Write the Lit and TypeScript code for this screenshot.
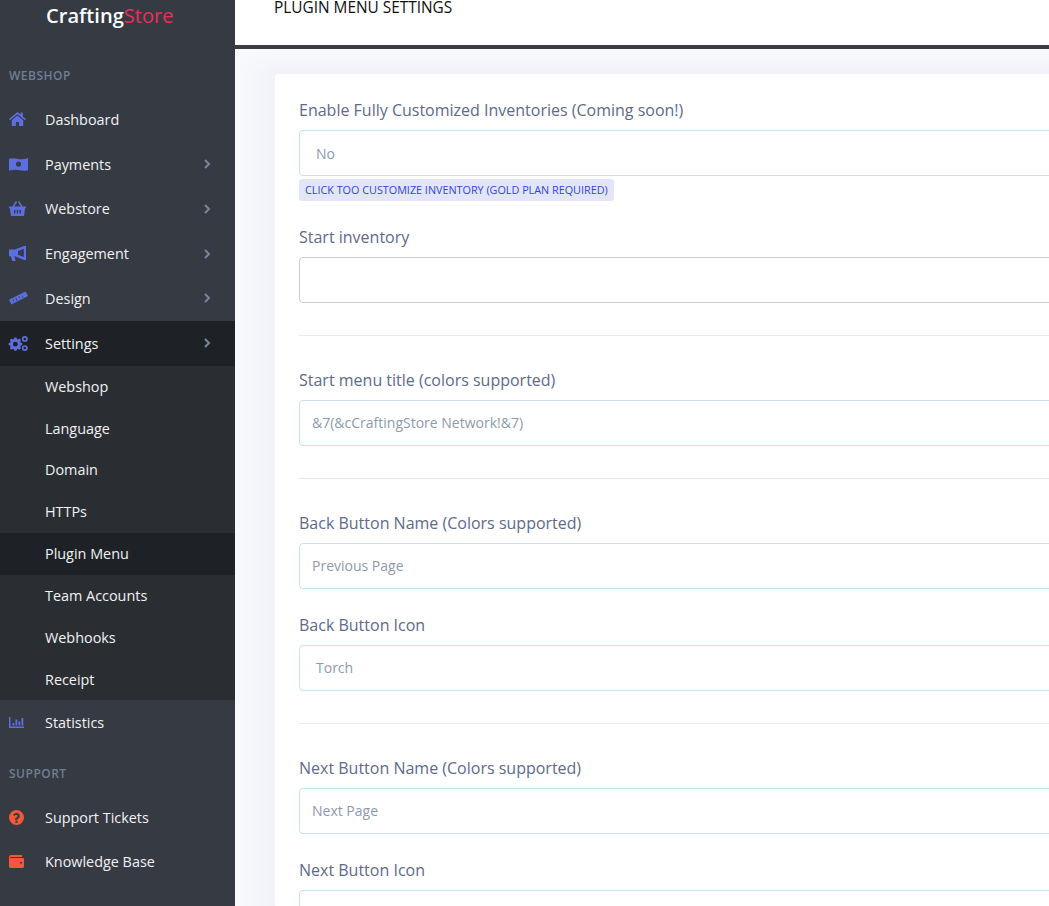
import { LitElement, html, css, svg } from "lit";
import { customElement } from "lit/decorators.js";

const I: Record<string, any> = {
  home: svg`<path d="M8.600 0 0 7l1 1.200L8.600 2.200 16.200 8.200l1-1.200L14 4.400V.6h-2.200v2L8.600 0Zm0 3.600L2.800 8.300V14h4.200v-4h3.200v4h4.200V8.300L8.600 3.600Z"/>`,
  money: svg`<path fill-rule="evenodd" d="M0 1.800C3 .8 6 1.400 9.500 2c3 .4 6 .1 9-1V12.200c-3 1-6 .6-9.500-.1-3-.5-6-.3-9 .7V1.800Zm9.300 2.300a2.500 2.500 0 1 0 0 5 2.500 2.500 0 0 0 0-5Z"/>`,
  basket: svg`<path fill-rule="evenodd" d="M0 5.400h3.400L6.800 0l1.300.9-2.800 4.500h6.400L8.900.9 10.200 0l3.400 5.400H17v1.700h-.9L15 14.500H2L.9 7.100H0V5.400Zm5 3v3.800h1.400V8.400H5Zm2.800 0v3.800h1.400V8.400H7.800Zm2.800 0v3.800H12V8.400h-1.400Z"/>`,
  horn: svg`<path fill-rule="evenodd" d="M0 3.500H6L15 0H17V14H15L6 10.200H5.500L6.700 15H3L2 10.200H0V3.500ZM9 5V8.800L14.800 11V2.800L9 5Z"/>`,
  ruler: svg`<path fill-rule="evenodd" d="M0 8.800 16.300.5l2.400 4.600L2.400 13.500 0 8.800Zm3.400-.3 1 1.900.7-.3-1-1.900-.7.3Zm2.900-1.400 1.400 2.800.7-.3-1.400-2.800-.7.3Zm3-1.500 1 1.900.7-.3-1-1.900-.7.3Zm2.900-1.400 1.400 2.800.7-.3L13 4.400l-.7.3Z"/>`,
  cogs: svg`<path fill-rule="evenodd" d="M5.200 1.500h2.400l.3 1.600 1.100.5 1.400-.9 1.700 1.700-.9 1.400.5 1.100 1.500.3v2.400l-1.500.3-.5 1.100.9 1.400-1.700 1.700-1.400-.9-1.100.5-.3 1.500H5.200l-.3-1.500-1.100-.5-1.400.9L.7 12.400l.9-1.400-.5-1.100L-.4 9.600V7.200l1.500-.3.5-1.100-.9-1.400 1.700-1.700 1.400.9 1.100-.5.3-1.600Zm1.200 4.400a2.500 2.500 0 1 0 0 5 2.500 2.500 0 0 0 0-5Z"/><path fill-rule="evenodd" d="M15.800 0a3 3 0 1 1 0 6 3 3 0 0 1 0-6Zm0 1.700a1.300 1.300 0 1 0 0 2.600 1.300 1.300 0 0 0 0-2.600ZM15.800 9.500a3 3 0 1 1 0 6 3 3 0 0 1 0-6Zm0 1.700a1.300 1.300 0 1 0 0 2.600 1.300 1.300 0 0 0 0-2.600Z"/>`,
  chart: svg`<path d="M0 0h1.500v9.500H15V11H0V0Zm3.500 6h1.800v2.500H3.500V6Zm3-3.500h1.800v6H6.500v-6Zm3 2h1.800v4H9.500v-4Zm3-3.500h1.800v7.500h-1.800V1Z"/>`,
  question: svg`<path fill-rule="evenodd" d="M7.500 0a7.500 7.500 0 1 1 0 15 7.500 7.500 0 0 1 0-15ZM7.600 3C5.900 3 4.700 3.800 4 5l1.500 1.100c.5-.6.9-1 1.800-1 .7 0 1.300.4 1.300 1 0 .5-.4.8-1 1.100-.8.5-1.500 1-1.500 2.100V10h2.200v-.4c0-.4.4-.6 1-1 .8-.5 1.500-1.200 1.500-2.500C10.800 4.100 9.300 3 7.600 3ZM6.400 10.700v2h2.300v-2H6.400Z"/>`,
  wallet: svg`<path fill-rule="evenodd" d="M2 0h11v2H1.500C1 2 1 3 1.500 3H13.500A1.500 1.500 0 0 1 15 4.500V12a1.500 1.500 0 0 1-1.500 1.500H1.500A1.500 1.500 0 0 1 0 12V2a2 2 0 0 1 2-2Zm10 7a1 1 0 1 0 0 2 1 1 0 0 0 0-2Z"/>`,
};

@customElement("app-root")
export class AppRoot extends LitElement {
  static styles = css`
    :host { display: block; width: 1049px; height: 906px; overflow: hidden; font-family: "Open Sans", "Liberation Sans", sans-serif; background: #f2f3f8; }
    * { box-sizing: border-box; }
    .app { display: flex; height: 906px; }
    .side { width: 235px; flex: none; background: #363a43; color: #f0f2f5; font-size: 14.4px; }
    .logo { height: 32px; padding-left: 46px; font-size: 20.1px; line-height: 32px; font-weight: 600; color: #fff; }
    .logo span { color: #e8305a; font-weight: 400; }
    .sec { height: 14px; margin: 0 0 0 9px; font-size: 12px; line-height: 14px; font-weight: 600; letter-spacing: .5px; color: #6f7f93; }
    .sec.a { margin-top: 37px; margin-bottom: 14px; }
    .sec.b { margin-top: 22px; margin-bottom: 13.7px; }
    .row { display: flex; align-items: center; height: 44.75px; padding-left: 9px; font-weight: 500; }
    .row .ic { width: 36px; height: 18px; display: flex; align-items: center; flex: none; }
    .row svg.i { fill: #5d6fe0; display: block; overflow: visible; }
    .row.orange svg.i { fill: #f4583a; }
    .row .t { flex: 1; }
    .row .ch { width: 8px; height: 10px; margin-right: 24px; stroke: #77879b; fill: none; stroke-width: 2; }
    .row.active { background: #1e2226; }
    .sub { background: #2a2e33; }
    .s { height: 41.85px; padding: .3px 0 0 45px; line-height: 41.5px; font-weight: 500; }
    .s.on { background: #1e2226; }
    .main { flex: 1; min-width: 0; }
    .head { height: 49px; background: #fff; border-bottom: 4px solid #3a3d46; color: #111; font-size: 15.4px; padding-left: 39px; line-height: 15px; font-weight: 400; }
    .body { padding: 25px 0 0 40px; background: linear-gradient(180deg, #f8f9fc, rgba(242, 243, 248, 0) 25px), linear-gradient(90deg, #f8f9fc, #f2f3f8 40px); height: 857px; overflow: hidden; }
    .card { width: 900px; background: #fff; border-radius: 4px 0 0 0; padding: 24px; height: 900px; }
    label { display: block; height: 24px; line-height: 24px; font-size: 16px; color: #5e6a8c; margin-bottom: 8px; }
    .input { height: 46px; border: 1px solid #c5e4f0; border-radius: 4px; padding-left: 12px; line-height: 44px; font-size: 14px; color: #8e9aaf; }
    .input.sel { padding-left: 16px; line-height: 46px; }
    .input.sel.low { line-height: 44px; }
    .input.gray { border-color: #c9ccd2; }
    .badge { display: inline-block; margin-top: 3px; height: 22px; line-height: 22px; padding: 0 6px; border-radius: 3px; background: #e3e6fa; color: #2f44e6; font-size: 10.8px; font-weight: 500; vertical-align: top; }
    .g.after-badge { margin-top: 24px; }
    .g.m { margin-top: 24px; }
    hr { border: 0; border-top: 1px solid #e8ebf1; margin: 32px 0; }
  `;

  private row(label: string, name: string, w: number, h: number, vbw: number, vbh: number, chev = false, cls = "") {
    return html`<div class="row ${cls}"><span class="ic"><svg class="i" width=${w} height=${h} viewBox="0 0 ${vbw} ${vbh}" preserveAspectRatio="none">${I[name]}</svg></span><span class="t">${label}</span>
      ${chev ? html`<svg class="ch" viewBox="0 0 8 10"><path d="M2 1l4 4-4 4"/></svg>` : ""}</div>`;
  }

  private field(label: string, value: string, cls = "", gcls = "") {
    return html`<div class="g ${gcls}"><label>${label}</label><div class="input ${cls}">${value}</div></div>`;
  }

  render() {
    return html`<div class="app">
      <aside class="side">
        <div class="logo">Crafting<span>Store</span></div>
        <div class="sec a">WEBSHOP</div>
        ${this.row("Dashboard", "home", 17, 14, 17.2, 14)}
        ${this.row("Payments", "money", 19, 14, 18.5, 13, true)}
        ${this.row("Webstore", "basket", 17, 15, 17, 14.5, true)}
        ${this.row("Engagement", "horn", 17, 15, 17, 15, true)}
        ${this.row("Design", "ruler", 19, 14, 18.7, 14, true)}
        ${this.row("Settings", "cogs", 19, 15, 19, 15.5, true, "active")}
        <div class="sub">
          <div class="s">Webshop</div><div class="s">Language</div><div class="s">Domain</div><div class="s">HTTPs</div>
          <div class="s on">Plugin Menu</div><div class="s">Team Accounts</div><div class="s">Webhooks</div><div class="s">Receipt</div>
        </div>
        ${this.row("Statistics", "chart", 15, 11, 15, 11)}
        <div class="sec b">SUPPORT</div>
        ${this.row("Support Tickets", "question", 15, 15, 15, 15, false, "orange")}
        ${this.row("Knowledge Base", "wallet", 15, 13, 15, 13.5, false, "orange")}
      </aside>
      <main class="main">
        <div class="head">PLUGIN MENU SETTINGS</div>
        <div class="body"><div class="card">
          ${this.field("Enable Fully Customized Inventories (Coming soon!)", "No", "sel")}
          <span class="badge">CLICK TOO CUSTOMIZE INVENTORY (GOLD PLAN REQUIRED)</span>
          ${this.field("Start inventory", "", "gray", "after-badge")}
          <hr />
          ${this.field("Start menu title (colors supported)", "&7(&cCraftingStore Network!&7)")}
          <hr />
          ${this.field("Back Button Name (Colors supported)", "Previous Page")}
          ${this.field("Back Button Icon", "Torch", "sel low", "m")}
          <hr />
          ${this.field("Next Button Name (Colors supported)", "Next Page")}
          ${this.field("Next Button Icon", "", "", "m")}
        </div></div>
      </main>
    </div>`;
  }
}
